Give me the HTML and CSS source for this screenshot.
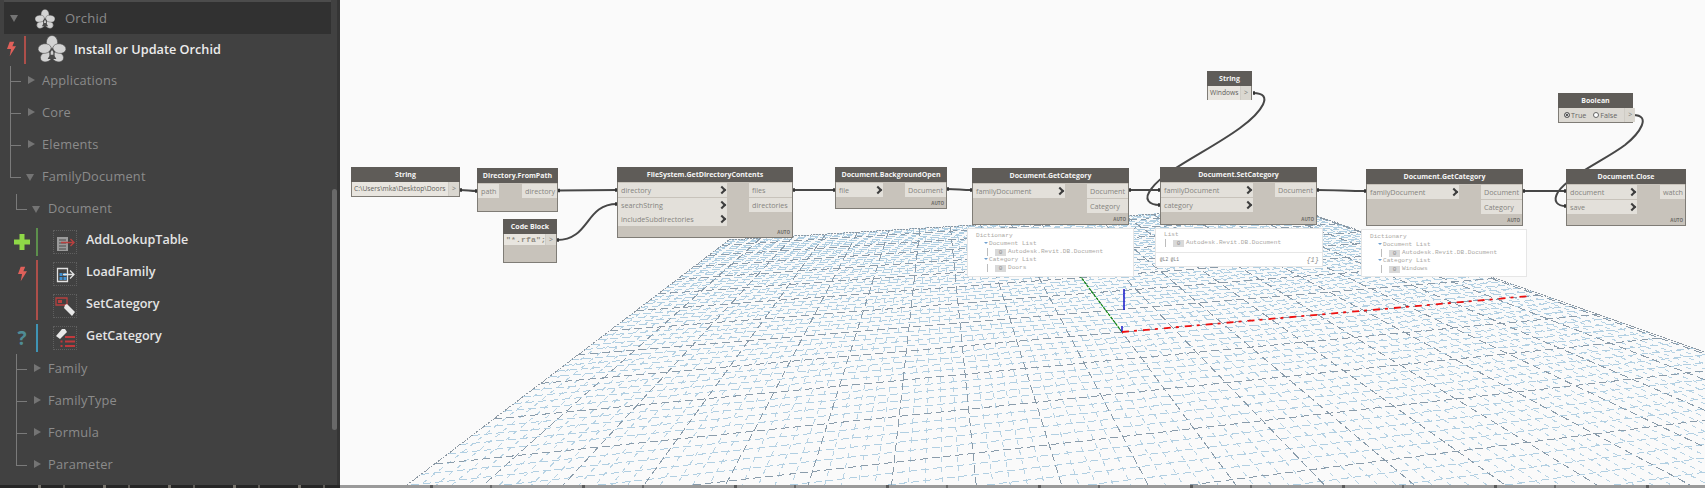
FILE: index.html
```html
<!DOCTYPE html>
<html lang="en">
<head>
<meta charset="utf-8">
<title>Dynamo graph</title>
<link rel="stylesheet" href="styles.css">
</head>
<body>
<div class="app">
  <div class="work">
    <aside class="panel">
      <svg class="defs" width="0" height="0" aria-hidden="true">
        <defs>
          <symbol id="orchid" viewBox="0 0 32 32">
            <g fill="#d2d2d2" stroke="#414141" stroke-width=".6">
              <ellipse cx="9.500" cy="25" rx="7" ry="5.500" transform="rotate(-25 9.500 25)"/>
              <ellipse cx="22.500" cy="25" rx="7" ry="5.500" transform="rotate(25 22.500 25)"/>
              <ellipse cx="16" cy="9" rx="6.500" ry="8.500"/>
              <ellipse cx="7.500" cy="15.500" rx="7.500" ry="5.500" transform="rotate(-8 7.500 15.500)"/>
              <ellipse cx="24.500" cy="15.500" rx="7.500" ry="5.500" transform="rotate(8 24.500 15.500)"/>
            </g>
            <path d="M16 14l3 4.500v5.500l2 3.500H11l2-3.500v-5.500z" fill="#4a4a4a"/>
            <path d="M16 17l1.500 2.500v3h-3v-3z" fill="#cfcfcf"/>
          </symbol>
          <symbol id="bolt" viewBox="0 0 10 16">
            <path d="M3 0h5L6 5h4L3 16l1.500-8H0z" fill="#e0605a"/>
          </symbol>
        </defs>
      </svg>
      <div class="head-row">
        <span class="arrow down head-arrow"></span>
        <svg class="head-icon"><use href="#orchid"/></svg>
        <span class="head-label">Orchid</span>
      </div>
      <div class="install-row">
        <svg class="install-bolt"><use href="#bolt"/></svg>
        <span class="bar bar-red bar-install"></span>
        <svg class="install-icon"><use href="#orchid"/></svg>
        <span class="install-label">Install or Update Orchid</span>
      </div>

      <div class="tree lv1 first"><span class="arrow right"></span><span class="cat">Applications</span></div>
      <div class="tree lv1"><span class="arrow right"></span><span class="cat">Core</span></div>
      <div class="tree lv1"><span class="arrow right"></span><span class="cat">Elements</span></div>
      <div class="tree lv1 last"><span class="arrow down"></span><span class="cat">FamilyDocument</span></div>
      <div class="tree lv2 only"><span class="arrow down"></span><span class="cat">Document</span></div>

      <div class="leaf">
        <span class="status">
          <svg width="16" height="16" viewBox="0 0 16 16"><path d="M5.500 0h5v5.500H16v5h-5.500V16h-5v-5.500H0v-5h5.500z" fill="#8fd847"/></svg>
        </span>
        <span class="bar bar-green"></span>
        <span class="node-icon">
          <svg width="22" height="22" viewBox="0 0 22 22">
            <path d="M3 6h11v14H3z" fill="#9a9a9a"/>
            <path d="M5 9h7M5 12h7M5 15h7M5 18h7" stroke="#4a4a4a" stroke-width="1.200"/>
            <path d="M7 11.500h13M16.500 8l3.500 3.500-3.500 3.500" stroke="#b8403f" stroke-width="1.400" fill="none"/>
          </svg>
        </span>
        <span class="leaf-label">AddLookupTable</span>
      </div>
      <div class="leaf">
        <span class="status">
          <svg class="leaf-bolt"><use href="#bolt"/></svg>
        </span>
        <span class="bar bar-red"></span>
        <span class="node-icon">
          <svg width="22" height="22" viewBox="0 0 22 22">
            <path d="M3.500 5.500h10v13h-10z" fill="none" stroke="#e2e2e2" stroke-width="1.300"/>
            <path d="M5.500 10h3v3h-3zM9.500 10h3v3h-3zM5.500 14h3v3h-3zM9.500 14h3v3h-3z" fill="#3f8fd0"/>
            <path d="M9 11.500h11M16 7.500l4 4-4 4" stroke="#e2e2e2" stroke-width="1.300" fill="none"/>
          </svg>
        </span>
        <span class="leaf-label">LoadFamily</span>
      </div>
      <div class="leaf joined">
        <span class="status"></span>
        <span class="bar bar-red"></span>
        <span class="node-icon">
          <svg width="22" height="22" viewBox="0 0 22 22">
            <path d="M2 3h11v7H2z" fill="none" stroke="#b8403f" stroke-width="1.300"/>
            <path d="M4 5h4v3H4z" fill="#b8403f"/>
            <path d="M13 9l8 8-3 4-8-8 1-3z" fill="#e8e8e8"/>
          </svg>
        </span>
        <span class="leaf-label">SetCategory</span>
      </div>
      <div class="leaf">
        <span class="status"><span class="help">?</span></span>
        <span class="bar bar-blue"></span>
        <span class="node-icon">
          <svg width="22" height="22" viewBox="0 0 22 22">
            <path d="M11 2l2 3-7 7-4-3 6-7z" fill="#e8e8e8"/>
            <path d="M11 10h10M11 14.500h10M11 19h10M6.500 14.500h2M6.500 19h2" stroke="#c0393c" stroke-width="2"/>
          </svg>
        </span>
        <span class="leaf-label">GetCategory</span>
      </div>

      <div class="tree lv2 first"><span class="arrow right"></span><span class="cat">Family</span></div>
      <div class="tree lv2"><span class="arrow right"></span><span class="cat">FamilyType</span></div>
      <div class="tree lv2"><span class="arrow right"></span><span class="cat">Formula</span></div>
      <div class="tree lv2 last"><span class="arrow right"></span><span class="cat">Parameter</span></div>
      <span class="scrollbar"></span>
    </aside>

    <main class="canvas">
      <svg id="grid" class="layer" viewBox="340 0 1365 485" width="1365" height="485" aria-hidden="true"></svg>

      <svg class="layer" viewBox="340 0 1365 485" width="1365" height="485" aria-hidden="true">
        <g class="wires">
          <path d="M460 190 C468 190 469 191 477 191"/>
          <path d="M558 190.500 C580 190.500 595 190 617 190"/>
          <path d="M557 240 C590 240 585 204 617 204"/>
          <path d="M793 190 C810 190 818 190 835 190"/>
          <path d="M947 189 C958 189 961 190 972 190"/>
          <path d="M1129 190 C1140 190 1149 190 1160 190"/>
          <path d="M1253 93 C1275 93 1262 112 1240 128 C1210 150 1165 170 1152 188 C1142 200 1150 205 1160 205"/>
          <path d="M1317 190 C1335 190 1348 191 1366 191"/>
          <path d="M1523 191 C1540 191 1549 191 1566 191"/>
          <path d="M1633 115 C1652 115 1640 133 1625 145 C1605 160 1570 175 1558 192 C1552 202 1558 206 1566 206"/>
        </g>
        <path class="nubs" d="M460 190h2M475 191h2M558 190.500h2M615 190h2M615 204h2M557 240h2M793 190h2M833 190h2M947 189h2M970 190h2M1129 190h2M1158 190h2M1158 205h2M1253 93h2M1317 190h2M1364 191h2M1523 191h2M1564 191h2M1564 206h2M1633 115h2"/>
      </svg>

      <div class="node n-str1">
        <div class="title">String</div>
        <div class="input-row"><span class="field">C:\Users\mka\Desktop\Doors</span><span class="out-tab">&gt;</span></div>
      </div>

      <div class="node n-dir">
        <div class="title">Directory.FromPath</div>
        <div class="body">
          <div class="ports"><div class="port w-path">path</div></div>
          <div class="ports"><div class="port w-dir">directory</div></div>
        </div>
      </div>

      <div class="node n-code">
        <div class="title">Code Block</div>
        <div class="input-row code"><span class="field">"*.rfa";</span><span class="out-tab">&gt;</span></div>
      </div>

      <div class="node n-fs">
        <div class="title">FileSystem.GetDirectoryContents</div>
        <div class="body">
          <div class="ports">
            <div class="port chev w-fs-in">directory</div>
            <div class="port chev w-fs-in">searchString</div>
            <div class="port chev w-fs-in">includeSubdirectories</div>
          </div>
          <div class="ports">
            <div class="port w-fs-out">files</div>
            <div class="port w-fs-out">directories</div>
          </div>
        </div>
        <span class="auto">AUTO</span>
      </div>

      <div class="node n-bg">
        <div class="title">Document.BackgroundOpen</div>
        <div class="body">
          <div class="ports"><div class="port chev w-bg-in">file</div></div>
          <div class="ports"><div class="port w-bg-out">Document</div></div>
        </div>
        <span class="auto">AUTO</span>
      </div>

      <div class="node n-get1">
        <div class="title">Document.GetCategory</div>
        <div class="body">
          <div class="ports"><div class="port chev w-cat-in">familyDocument</div></div>
          <div class="ports">
            <div class="port w-cat-out">Document</div>
            <div class="port w-cat-out">Category</div>
          </div>
        </div>
        <span class="auto">AUTO</span>
      </div>

      <div class="node n-set">
        <div class="title">Document.SetCategory</div>
        <div class="body">
          <div class="ports">
            <div class="port chev w-cat-in">familyDocument</div>
            <div class="port chev w-cat-in">category</div>
          </div>
          <div class="ports"><div class="port w-cat-out">Document</div></div>
        </div>
        <span class="auto">AUTO</span>
      </div>

      <div class="node n-str2">
        <div class="title">String</div>
        <div class="input-row"><span class="field">Windows</span><span class="out-tab">&gt;</span></div>
      </div>

      <div class="node n-get2">
        <div class="title">Document.GetCategory</div>
        <div class="body">
          <div class="ports"><div class="port chev w-cat-in">familyDocument</div></div>
          <div class="ports">
            <div class="port w-cat-out">Document</div>
            <div class="port w-cat-out">Category</div>
          </div>
        </div>
        <span class="auto">AUTO</span>
      </div>

      <div class="node n-close">
        <div class="title">Document.Close</div>
        <div class="body">
          <div class="ports">
            <div class="port chev w-close-in">document</div>
            <div class="port chev w-close-in">save</div>
          </div>
          <div class="ports"><div class="port w-close-out">watch</div></div>
        </div>
        <span class="auto">AUTO</span>
      </div>

      <div class="node n-bool">
        <div class="title">Boolean</div>
        <div class="input-row">
          <span class="radios">
            <span class="radio on"></span><span class="radio-label">True</span>
            <span class="radio"></span><span class="radio-label">False</span>
          </span>
          <span class="out-tab">&gt;</span>
        </div>
      </div>

      <div class="bubble b-1">
        <div class="l0">Dictionary</div>
        <div class="l1">Document List</div>
        <div class="l2"><span class="chip">0</span>Autodesk.Revit.DB.Document</div>
        <div class="l1">Category List</div>
        <div class="l2"><span class="chip">0</span>Doors</div>
      </div>

      <div class="bubble b-2">
        <div class="l0 list-head">List</div>
        <div class="l2 list-item"><span class="chip">0</span>Autodesk.Revit.DB.Document</div>
        <div class="b-foot"><span>@L2 @L1</span><span class="count">{1}</span></div>
      </div>

      <div class="bubble b-3">
        <div class="l0">Dictionary</div>
        <div class="l1">Document List</div>
        <div class="l2"><span class="chip">0</span>Autodesk.Revit.DB.Document</div>
        <div class="l1">Category List</div>
        <div class="l2"><span class="chip">0</span>Windows</div>
      </div>
    </main>
  </div>
  <div class="footer">
    <span class="foot-panel"></span>
    <span class="foot-canvas"></span>
  </div>
</div>
<script src="script.js"></script>
</body>
</html>
```
FILE: styles.css
```css
* { box-sizing: border-box; }
html, body { margin: 0; padding: 0; height: 100%; overflow: hidden; background: #fafafa; }
body { font-family: "Open Sans", "Liberation Sans", sans-serif; }

.app { width: 1705px; height: 488px; display: flex; flex-direction: column; }
.work { flex: 1; display: flex; min-height: 0; }
.footer { height: 3px; display: flex; }
.foot-panel {
  width: 340px; flex: none;
  background: repeating-linear-gradient(90deg, #262626 0 38px, #77736c 38px 41px, #262626 41px 63px, #5f5c58 63px 65px);
}
.foot-canvas {
  flex: 1;
  background: repeating-linear-gradient(90deg, #9a9a9a 0 90px, #5a5a5a 90px 93px, #9a9a9a 93px 150px, #6a6a6a 150px 152px);
}

/* ---------- library panel ---------- */
.panel {
  width: 340px; flex: none; position: relative;
  background: #414141;
  border-right: 3px solid #353535;
  padding-right: 6px;
  overflow: hidden;
}
.defs { position: absolute; }

.head-row {
  height: 34px; margin-left: 4px;
  border-top: 2px solid #4c4c4c;
  background: #313131;
  display: flex; align-items: center;
  width: 327px;
}
.head-arrow { margin-left: 6px; }
.head-icon { width: 20px; height: 20px; margin-left: 17px; margin-top: 1px; }
.head-label { margin-left: 10px; font-size: 13px; color: #8a8a8a; letter-spacing: .2px; }

.install-row { height: 30px; display: flex; align-items: center; }
.install-bolt { width: 9px; height: 16px; margin-left: 7px; }
.install-icon { width: 30px; height: 28px; margin-left: 11px; }
.install-label { margin-left: 7px; font-size: 12.700px; font-weight: 600; color: #ececec; }

.bar { width: 2px; flex: none; display: block; }
.bar-red { background: #ad4f4a; }
.bar-green { background: #5c8f4c; }
.bar-blue { background: #3f94b5; }
.bar-install { height: 28px; margin-left: 8px; margin-top: 2px; }

.arrow { display: block; flex: none; width: 0; height: 0; border-style: solid; border-color: transparent; }
.arrow.right { border-width: 4px 0 4px 7px; border-left-color: #747474; }
.arrow.down { border-width: 7px 4px 0 4px; border-top-color: #747474; }

.tree {
  height: 32px; position: relative;
  display: flex; align-items: center;
}
.tree::before { content: ""; position: absolute; top: 0; bottom: 0; width: 1px; background: #7a7a7a; }
.tree::after { content: ""; position: absolute; top: 17px; height: 1px; background: #7a7a7a; }
.tree.first::before { top: 2px; }
.tree.last::before { bottom: 14px; }
.tree.only::before { top: 2px; bottom: 14px; }

.lv1::before { left: 10px; }
.lv1::after { left: 10px; width: 11px; }
.lv1 .arrow { margin-left: 28px; }
.lv1 .arrow.down { margin-left: 26px; margin-top: 3px; }
.lv1 .arrow.right + .cat { margin-left: 7px; }
.lv1 .arrow.down + .cat { margin-left: 8px; }

.lv2::before { left: 16px; }
.lv2::after { left: 16px; width: 11px; }
.lv2 .arrow.right { margin-left: 34px; }
.lv2 .arrow.down { margin-left: 32px; margin-top: 3px; }
.lv2 .arrow.right + .cat { margin-left: 7px; }
.lv2 .arrow.down + .cat { margin-left: 8px; }

.cat { font-size: 12.800px; color: #8b8b8b; letter-spacing: .2px; }

.leaf { height: 32px; display: flex; align-items: flex-start; }
.status { width: 16px; height: 16px; margin: 10px 0 0 14px; flex: none; display: flex; justify-content: center; align-items: center; }
.leaf .bar { height: 28px; margin: 4px 0 0 6px; }
.leaf.joined .bar { height: 32px; margin-top: 0; }
.node-icon {
  width: 24px; height: 24px; margin: 6px 0 0 15px; flex: none;
  border: 1px dotted #5f5f5f;
  display: block;
}
.node-icon svg { display: block; }
.leaf-label { margin: 6px 0 0 9px; font-size: 12.600px; font-weight: 600; line-height: 20px; color: #e4e4e4; }
.leaf-bolt { width: 9px; height: 16px; }
.help { font-size: 19px; font-weight: 700; color: #4f8c96; line-height: 16px; }

.scrollbar {
  position: absolute; left: 332px; top: 189px;
  width: 5px; height: 241px; border-radius: 3px;
  background: #696969;
}

/* ---------- canvas ---------- */
.canvas { flex: 1; position: relative; background: #fafafa; overflow: hidden; }
.layer { position: absolute; left: 0; top: 0; display: block; }
.wires path { fill: none; stroke: #474747; stroke-width: 2; }
.nubs { fill: none; stroke: #333; stroke-width: 3.500; }

.node {
  position: absolute;
  background: #c8c3bb;
  border: 1px solid #7f7c76;
  display: flex; flex-direction: column;
}
.n-str1 { left: 11px; top: 167px; width: 109px; height: 30px; }
.n-dir { left: 137px; top: 168px; width: 81px; height: 44px; }
.n-code { left: 163px; top: 219px; width: 54px; height: 44px; }
.n-fs { left: 277px; top: 167px; width: 176px; height: 71px; }
.n-bg { left: 495px; top: 167px; width: 112px; height: 42px; }
.n-get1 { left: 632px; top: 168px; width: 157px; height: 57px; }
.n-set { left: 820px; top: 167px; width: 157px; height: 58px; }
.n-str2 { left: 867px; top: 71px; width: 45px; height: 29px; }
.n-get2 { left: 1026px; top: 169px; width: 157px; height: 57px; }
.n-close { left: 1226px; top: 169px; width: 120px; height: 57px; }
.n-bool { left: 1218px; top: 93px; width: 75px; height: 30px; }

.title {
  height: 15px; flex: none; margin: -1px -1px 0;
  background: #5f5c58;
  color: #f4f4f4;
  font-size: 7px; font-weight: 700; line-height: 15px;
  text-align: center; white-space: nowrap;
}
.body { display: flex; justify-content: space-between; padding-top: 1px; }
.ports { display: flex; flex-direction: column; }
.port {
  height: 14px; margin-bottom: 0.500px;
  background: #e3e0da; color: #858480;
  font-size: 7.200px; line-height: 14px; padding: 0 3px;
  white-space: nowrap; position: relative;
}
.chev::after {
  content: ""; position: absolute; right: 2px; top: 4px;
  width: 4px; height: 4px;
  border-top: 2px solid #3d3d3d; border-right: 2px solid #3d3d3d;
  transform: rotate(45deg);
}
.w-path { width: 21px; }
.w-dir { width: 35px; }
.w-fs-in { width: 109px; }
.w-fs-out { width: 43px; }
.w-bg-in { width: 47px; }
.w-bg-out { width: 41px; }
.w-cat-in { width: 92px; }
.w-cat-out { width: 41px; }
.w-close-in { width: 70px; }
.w-close-out { width: 25px; }

.input-row { display: flex; height: 14px; flex: none; }
.field {
  flex: 1; min-width: 0; padding: 0 2px;
  background: #e8e5df; color: #5f5e5a;
  font-size: 6.700px; line-height: 14px; white-space: nowrap; overflow: hidden;
}
.out-tab {
  width: 11px; flex: none; text-align: center;
  background: #dad7d0; color: #777;
  font-size: 7px; line-height: 14px;
  border-left: 1px solid #cfccc5;
}
.code .field { font-family: "Liberation Mono", monospace; font-size: 8px; font-weight: 700; color: #8d8a80; letter-spacing: .2px; }
.n-code .input-row { height: 11px; }
.n-code .field, .n-code .out-tab { line-height: 11px; }

.radios { flex: 1; display: flex; align-items: center; background: #dcd9d3; padding-left: 5px; }
.radio { width: 6px; height: 6px; border-radius: 50%; border: 1px solid #666; background: #fff; flex: none; }
.radio.on { background: #222; box-shadow: inset 0 0 0 1px #fff; }
.radio-label { font-size: 7.200px; color: #666; margin: 0 7px 0 1px; }

.auto {
  position: absolute; right: 2px; bottom: 1px;
  font-size: 4.500px; font-weight: 700; color: #6d6a65; line-height: 7px;
}

/* ---------- preview bubbles ---------- */
.bubble {
  position: absolute;
  background: #fff;
  border: 1px solid #e6e6e6;
  font-family: "Liberation Mono", monospace;
  font-size: 6.100px; line-height: 8px; color: #aaa8a4;
  white-space: nowrap;
}
.b-1 { left: 627px; top: 228px; width: 167px; height: 49px; padding: 3px 0 0 8px; }
.b-2 { left: 815px; top: 228px; width: 168px; height: 39px; padding-top: 2px; }
.b-3 { left: 1021px; top: 229px; width: 166px; height: 48px; padding: 3px 0 0 8px; }
.l1 { margin-left: 12px; }
.l1::before {
  content: ""; display: inline-block; vertical-align: middle;
  border-style: solid; border-width: 2px 2px 0; border-color: #6f9fd0 transparent transparent;
  margin: 0 1px 0 -4px;
}
.l2 { margin-left: 19px; position: relative; }
.l2::before {
  content: ""; position: absolute; left: -8px; top: 0; width: 1px; height: 8px; background: #bdbdbd;
}
.chip {
  display: inline-block; width: 11px; height: 7px; line-height: 7px;
  background: #d9d9d9; color: #8e8e8e; text-align: center; margin-right: 2px;
  vertical-align: top; margin-top: 1px;
}
.list-head { margin-left: 8px; }
.list-item { margin-left: 17px; }
.b-foot {
  margin-top: 5px; padding: 3px 3px 0 4px; border-top: 1px solid #e6e6e6;
  display: flex; justify-content: space-between;
  font-size: 4.500px; color: #777;
}
.count { font-size: 7px; font-style: italic; color: #8c8c8c; }

/* ---------- grid lines drawn by the script ---------- */
.g-light { stroke: #b1cfe2; stroke-width: 1; stroke-dasharray: 8 4; shape-rendering: crispEdges; }
.g-light-steep { stroke: #b8d3e4; stroke-width: 1; stroke-dasharray: 5 5; shape-rendering: crispEdges; }
.g-dark { stroke: #8a9cab; stroke-width: 1; stroke-dasharray: 8 4; shape-rendering: crispEdges; }
.g-edge { stroke: #8c98a3; stroke-width: 1; stroke-dasharray: 2 1; shape-rendering: crispEdges; }
.ax-g { stroke: #0c8a0c; stroke-width: 1.200; stroke-dasharray: 3 1; }
.ax-b { stroke: #1414c8; stroke-width: 1.500; }
.ax-r { stroke: #ee0f0f; stroke-width: 1.800; stroke-dasharray: 7 5 3 6; }
```
FILE: script.js
```js
// Perspective ground grid of the 3D background: two families of lines, each
// running through its own vanishing point, evenly spaced in world units.
(function () {
  var NS = 'http://www.w3.org/2000/svg';
  var svg = document.getElementById('grid');

  var VP1 = { x: 5400, y: -46 };   // family running left -> right
  var VP2 = { x: 936, y: 82 };     // family running back -> front
  var L = { x: 729, y: 240 };      // back-left corner
  var C = { x: 1289, y: 206 };     // back-right corner
  var O = { x: 1122, y: 332 };     // world origin
  var BOTTOM = 485;
  var RIGHT = 1705;

  function add(p, q, cls) {
    var l = document.createElementNS(NS, 'line');
    l.setAttribute('x1', p.x.toFixed(1));
    l.setAttribute('y1', p.y.toFixed(1));
    l.setAttribute('x2', q.x.toFixed(1));
    l.setAttribute('y2', q.y.toFixed(1));
    l.setAttribute('class', cls);
    svg.appendChild(l);
  }
  function dist(a, b) { return Math.hypot(a.x - b.x, a.y - b.y); }

  // intersection of lines a-b and c-d
  function cross(a, b, c, d) {
    var d1x = b.x - a.x, d1y = b.y - a.y, d2x = d.x - c.x, d2y = d.y - c.y;
    var t = ((c.x - a.x) * d2y - (c.y - a.y) * d2x) / (d1x * d2y - d1y * d2x);
    return { x: a.x + d1x * t, y: a.y + d1y * t };
  }
  function clipBottomRight(from, toward) {
    var dx = toward.x - from.x, dy = toward.y - from.y, t = Infinity;
    if (dy > 0) t = Math.min(t, (BOTTOM - from.y) / dy);
    if (dx > 0) t = Math.min(t, (RIGHT - from.x) / dx);
    return { x: from.x + dx * t, y: from.y + dy * t };
  }

  var segments = { dark: [], light: [], steep: [] };

  // family through VP2, anchored on the back edge; spacing is even in 1/distance to VP1
  var iL = 1 / dist(L, VP1), iC = 1 / dist(C, VP1);
  var onBack = cross(VP2, O, L, C);
  var tO = (1 / dist(onBack, VP1) - iL) / (iC - iL);
  for (var i = -70; i <= 70; i++) {
    var t = tO + i * 0.0105;
    if (t < 0 || t > 1) continue;
    var d = 1 / (iL + t * (iC - iL));
    var f = (dist(L, VP1) - d) / (dist(L, VP1) - dist(C, VP1));
    var p = { x: L.x + (C.x - L.x) * f, y: L.y + (C.y - L.y) * f };
    var dir = { x: p.x + (p.x - VP2.x), y: p.y + (p.y - VP2.y) };
    (i % 5 === 0 ? segments.dark : segments.steep).push([p, clipBottomRight(p, dir)]);
  }

  // family through VP1, anchored on the left edge
  var leftLow = { x: 407, y: 485 };
  var rightFar = { x: 1705, y: 352 };
  var onLeft = cross(VP1, O, L, leftLow);
  var inv0 = 1 / (onLeft.y - VP2.y);
  var step = 7e-5;
  for (var j = -50; j <= 30; j++) {
    var invY = inv0 - j * step;
    if (invY <= 0) continue;
    var y = VP2.y + 1 / invY;
    if (y < L.y) continue;
    var a = cross(L, leftLow, { x: 0, y: y }, { x: 10, y: y });
    var b = cross(VP1, a, VP2, rightFar);
    if (a.y > BOTTOM) a = cross(VP1, a, { x: 0, y: BOTTOM }, { x: 10, y: BOTTOM });
    if (b.x > RIGHT) b = cross(VP1, a, { x: RIGHT, y: 0 }, { x: RIGHT, y: 10 });
    (j % 5 === 0 ? segments.dark : segments.light).push([a, b]);
  }

  segments.steep.forEach(function (s) { add(s[0], s[1], 'g-light-steep'); });
  segments.light.forEach(function (s) { add(s[0], s[1], 'g-light'); });
  segments.dark.forEach(function (s) { add(s[0], s[1], 'g-dark'); });

  // outer boundary
  add(leftLow, L, 'g-edge');
  add(L, C, 'g-edge');
  add(C, rightFar, 'g-edge');

  // axes
  add(O, { x: 1071, y: 264 }, 'ax-g');
  add({ x: 1124, y: 289 }, { x: 1124, y: 310 }, 'ax-b');
  add({ x: 1122, y: 326 }, O, 'ax-b');
  add(O, { x: 1530, y: 296 }, 'ax-r');
})();
```
